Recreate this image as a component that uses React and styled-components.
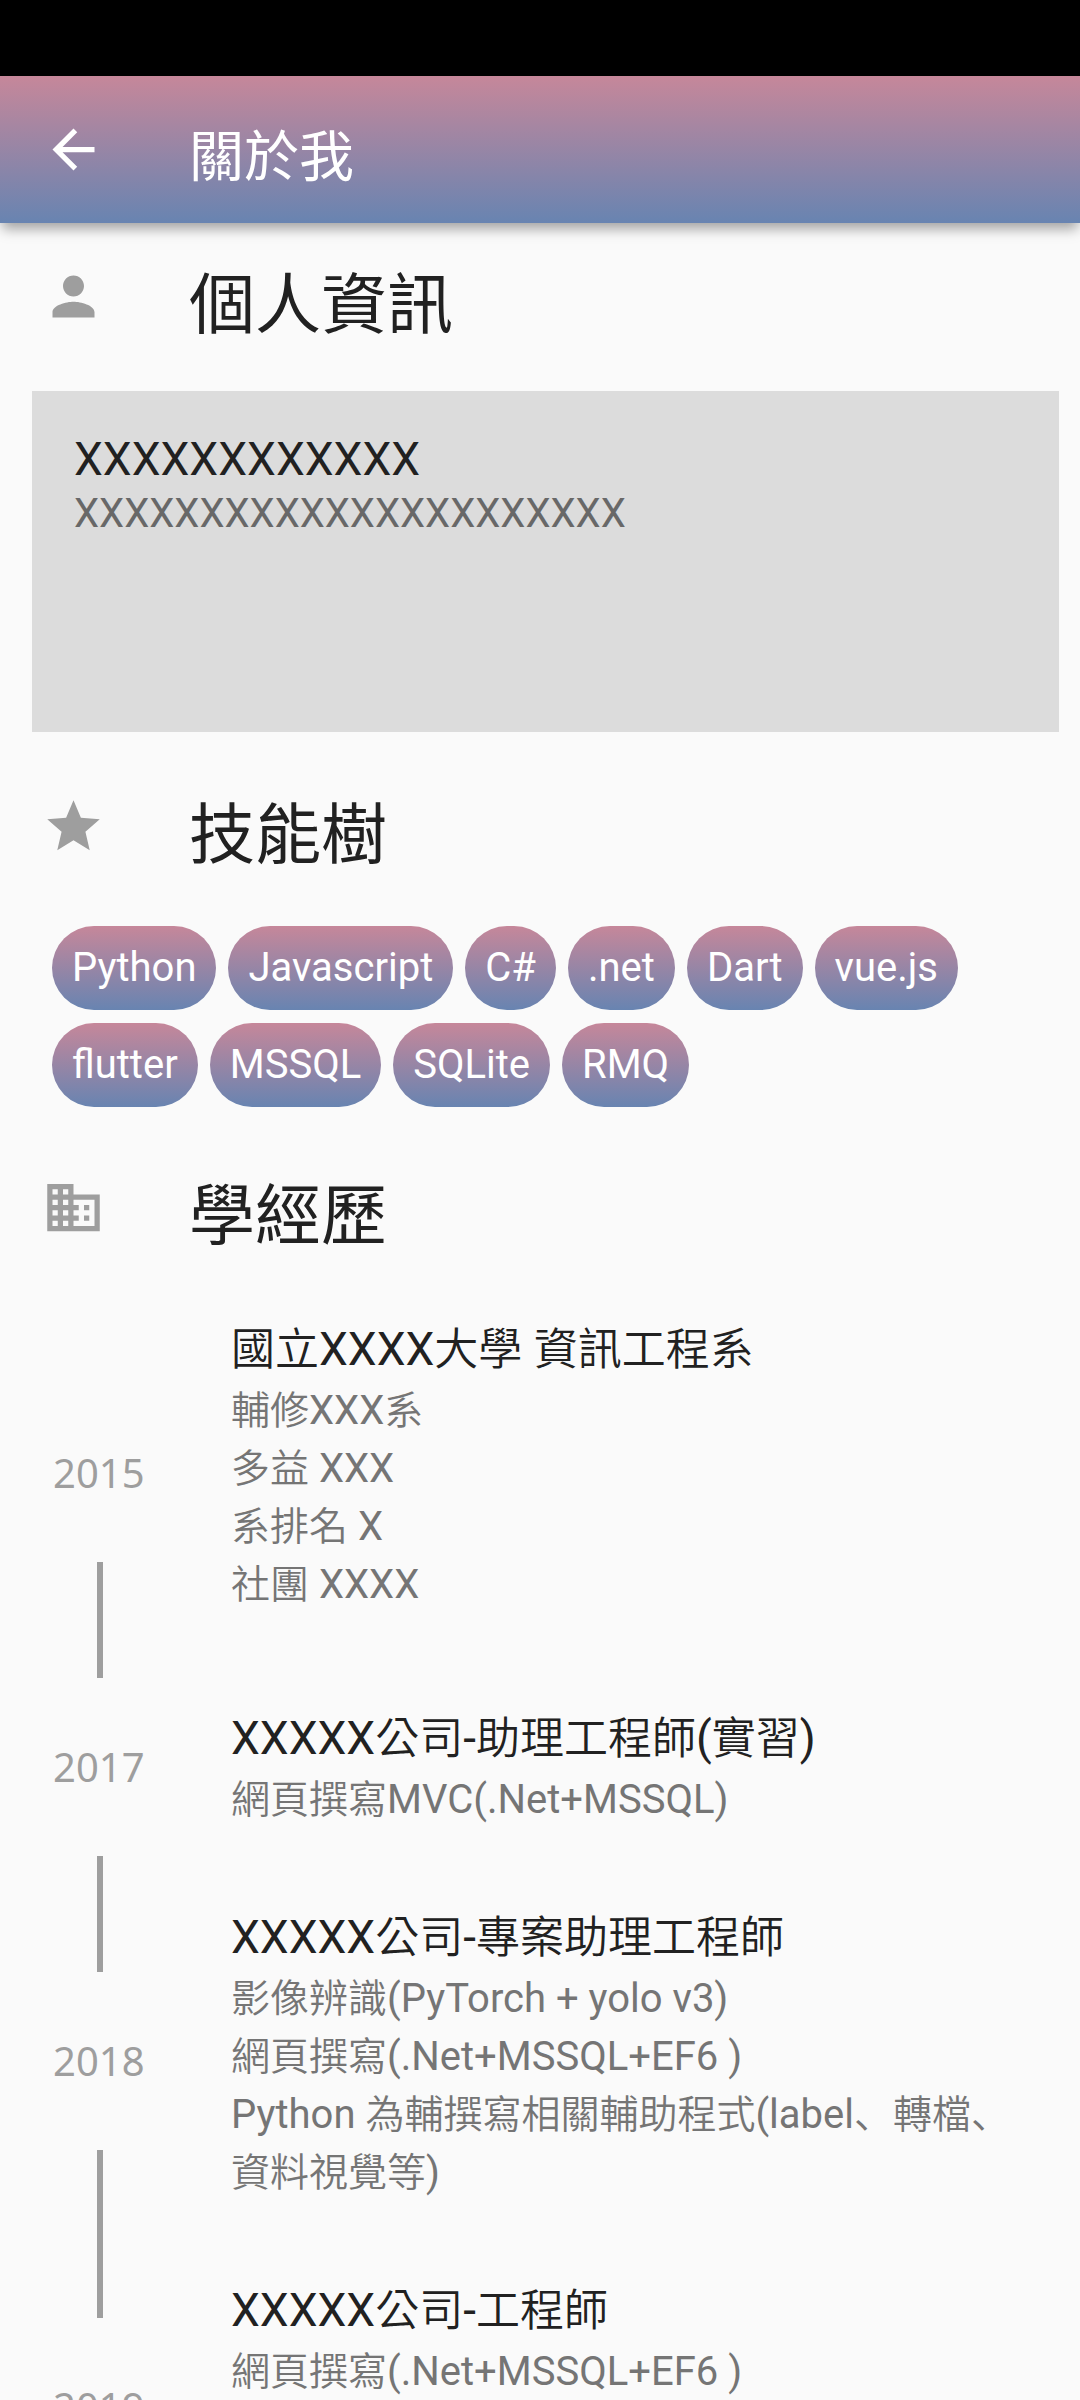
import React from "react";
import styled, { createGlobalStyle } from "styled-components";

const GlobalStyle = createGlobalStyle`
  * { box-sizing: border-box; }
  body {
    margin: 0;
    background: #fafafa;
    color: #212121;
    font-family: Roboto, "Noto Sans CJK TC", sans-serif;
    font-size: 40px;
  }
  h1, h2, h3, p, ul, ol { margin: 0; padding: 0; font-weight: 400; }
  ul, ol { list-style: none; }
`;

const gradient = "linear-gradient(180deg, #c6879a 0%, #6884b1 100%)";

const Screen = styled.div`
  display: flex;
  flex-direction: column;
  height: 100vh;
  overflow: hidden;
`;

const StatusBar = styled.div`
  flex: none;
  height: 76px;
  background: #000;
`;

const AppBar = styled.header`
  flex: none;
  display: flex;
  align-items: center;
  height: 147px;
  padding: 0 42px;
  background: ${gradient};
  box-shadow: 0 8px 12px -2px rgba(0, 0, 0, 0.35);
  z-index: 1;
`;

const BackButton = styled.button`
  display: flex;
  padding: 0;
  margin-right: 84px;
  border: 0;
  background: none;
  color: #fff;
  cursor: pointer;
`;

const Glyph = styled.svg`
  flex: none;
  width: 63px;
  height: 63px;
  fill: currentColor;
`;

const AppTitle = styled.h1`
  padding-top: 14px;
  color: #fff;
  font-size: 55px;
  line-height: 60px;
`;

const Content = styled.main`
  flex: 1;
  min-height: 0;
  overflow-y: auto;
  scrollbar-width: none;
`;

const SectionHead = styled.div`
  display: flex;
  align-items: center;
  gap: 84px;
  height: 147px;
  padding: 0 42px;
  color: #9e9e9e;
`;

const SectionTitle = styled.h2`
  padding-top: 18px;
  color: #212121;
  font-size: 66px;
  line-height: 72px;
`;

const InfoCard = styled.section`
  min-height: 341px;
  margin: 21px 21px 21px 32px;
  padding: 41px 42px;
  background: #dcdcdc;
`;

const InfoName = styled.h3`
  font-size: 46px;
  line-height: 54px;
`;

const InfoText = styled.p`
  color: #686868;
  line-height: 56px;
`;

const Chips = styled.ul`
  display: flex;
  flex-wrap: wrap;
  gap: 13px 12px;
  padding: 26px 52px 27px;
`;

const Chip = styled.li`
  height: 84px;
  padding: 0 20px;
  border-radius: 42px;
  background: ${gradient};
  color: #fff;
  line-height: 84px;
`;

const Timeline = styled.ol`
  padding: 5px 53px 0;
`;

const Entry = styled.li`
  display: flex;
  gap: 84px;
  min-height: ${(p) => p.$minHeight || 215}px;
`;

const Track = styled.div`
  flex: none;
  display: flex;
  flex-direction: column;
  width: 94px;
`;

const Line = styled.span`
  flex: 1;
  align-self: center;
  width: 6px;
  background: ${(p) => (p.$hidden ? "transparent" : "#9e9e9e")};
`;

const Year = styled.time`
  color: #9e9e9e;
  font-family: "Noto Sans", "Open Sans", sans-serif;
  line-height: 178px;
`;

const Details = styled.div`
  flex: 1;
  align-self: ${(p) => (p.$top ? "flex-start" : "flex-end")};
  padding: 30px 0 45px;
`;

const EntryTitle = styled.h3`
  font-size: 46px;
  line-height: 66px;
`;

const EntryLine = styled.p`
  color: #757575;
  line-height: 58px;
`;

const Han = styled.span`
  font-family: "Noto Sans CJK TC", sans-serif;
  font-size: ${(p) => p.$size}px;
  font-weight: 350;
  line-height: 1;
`;

const Comma = styled(Han)`
  font-family: "Noto Sans CJK JP", sans-serif;
`;

const RUNS = /(\u3001|[\u4e00-\u9fff]+)/;

function Mixed({ text, size }) {
  return text.split(RUNS).map((run, i) => {
    if (i % 2 === 0) return run;
    const Run = run === "、" ? Comma : Han;
    return (
      <Run key={i} $size={size} lang={run === "、" ? "ja" : undefined}>
        {run}
      </Run>
    );
  });
}

const icons = {
  back: "M20 11H7.83l5.59-5.59L12 4l-8 8 8 8 1.41-1.41L7.83 13H20v-2z",
  person:
    "M12 12c2.21 0 4-1.79 4-4s-1.79-4-4-4-4 1.79-4 4 1.79 4 4 4zm0 2c-2.67 0-8 1.34-8 4v2h16v-2c0-2.66-5.33-4-8-4z",
  star: "M12 17.27L18.18 21l-1.64-7.03L22 9.24l-7.19-.61L12 2 9.19 8.63 2 9.24l5.46 4.73L5.82 21z",
  business:
    "M12 7V3H2v18h20V7H12zM6 19H4v-2h2v2zm0-4H4v-2h2v2zm0-4H4V9h2v2zm0-4H4V5h2v2zm4 12H8v-2h2v2zm0-4H8v-2h2v2zm0-4H8V9h2v2zm0-4H8V5h2v2zm10 12h-8v-2h2v-2h-2v-2h2v-2h-2V9h8v10zm-2-8h-2v2h2v-2zm0 4h-2v2h2v-2z",
};

function Icon({ name }) {
  return (
    <Glyph viewBox="0 0 24 24" aria-hidden="true">
      <path d={icons[name]} />
    </Glyph>
  );
}

function Section({ icon, title }) {
  return (
    <SectionHead>
      <Icon name={icon} />
      <SectionTitle>{title}</SectionTitle>
    </SectionHead>
  );
}

const skills = ["Python", "Javascript", "C#", ".net", "Dart", "vue.js", "flutter", "MSSQL", "SQLite", "RMQ"];

const history = [
  {
    year: "2015",
    title: "國立XXXX大學 資訊工程系",
    lines: ["輔修XXX系", "多益 XXX", "系排名 X", "社團 XXXX"],
  },
  {
    year: "2017",
    title: "XXXXX公司-助理工程師(實習)",
    lines: ["網頁撰寫MVC(.Net+MSSQL)"],
  },
  {
    year: "2018",
    title: "XXXXX公司-專案助理工程師",
    lines: [
      "影像辨識(PyTorch + yolo v3)",
      "網頁撰寫(.Net+MSSQL+EF6 )",
      "Python 為輔撰寫相關輔助程式(label、轉檔、資料視覺等)",
    ],
  },
  {
    year: "2019",
    title: "XXXXX公司-工程師",
    lines: ["網頁撰寫(.Net+MSSQL+EF6 )"],
    minHeight: 320,
  },
];

export default function App() {
  return (
    <Screen>
      <GlobalStyle />
      <StatusBar />
      <AppBar>
        <BackButton type="button" aria-label="返回">
          <Icon name="back" />
        </BackButton>
        <AppTitle>關於我</AppTitle>
      </AppBar>
      <Content>
        <Section icon="person" title="個人資訊" />
        <InfoCard>
          <InfoName>XXXXXXXXXXXX</InfoName>
          <InfoText>XXXXXXXXXXXXXXXXXXXXXX</InfoText>
        </InfoCard>
        <Section icon="star" title="技能樹" />
        <Chips>
          {skills.map((s) => (
            <Chip key={s}>{s}</Chip>
          ))}
        </Chips>
        <Section icon="business" title="學經歷" />
        <Timeline>
          {history.map((e, i) => (
            <Entry key={e.year} $minHeight={e.minHeight}>
              <Track>
                <Line $hidden={i === 0} />
                <Year>{e.year}</Year>
                <Line $hidden={i === history.length - 1} />
              </Track>
              <Details $top={Boolean(e.minHeight)}>
                <EntryTitle>
                  <Mixed text={e.title} size={44} />
                </EntryTitle>
                {e.lines.map((l) => (
                  <EntryLine key={l}>
                    <Mixed text={l} size={39} />
                  </EntryLine>
                ))}
              </Details>
            </Entry>
          ))}
        </Timeline>
      </Content>
    </Screen>
  );
}
